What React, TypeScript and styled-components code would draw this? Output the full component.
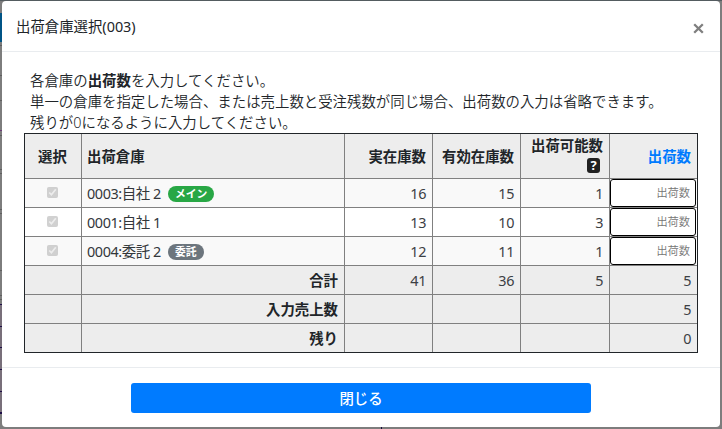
import React from "react";
import styled, { createGlobalStyle, css } from "styled-components";

const Global = createGlobalStyle`
  * { box-sizing: border-box; }
  html, body, #root { height: 100%; }
  body {
    margin: 0;
    overflow: hidden;
    color: #212529;
    font-family: "Noto Sans", "Noto Sans CJK JP", sans-serif;
    font-size: 14.4px;
    font-weight: 350;
    line-height: 21.2px;
  }
`;

const edgeLine = (y: number, color: string, height = 1) =>
  `linear-gradient(${color}, ${color}) 0 ${y}px / 2px ${height}px no-repeat`;

const edgeLines = [
  ...[45, 75, 100, 135, 169, 173, 209, 213, 270, 295, 299].map((y) => edgeLine(y, "#5f5f5f")),
  edgeLine(130, "#6b3b76"),
  ...[304, 326, 347, 369, 391].map((y) => edgeLine(y, "#1d0c46")),
  edgeLine(412, "#1d0c46", 2),
  edgeLine(304, "#786f7a", 109),
].join(",");

const Backdrop = styled.div`
  height: 429px;
  padding: 1px 2px 2px;
  background:
    linear-gradient(#005486, #005486) 0 13px / 2px 29px no-repeat,
    ${edgeLines},
    linear-gradient(#190c3b, #190c3b) 381px 427px / 1px 2px no-repeat,
    linear-gradient(#545c60, #545c60) 0 0 / 100% 1px no-repeat,
    #7d7d7d;
`;

const Dialog = styled.section`
  display: flex;
  flex-direction: column;
  height: 426px;
  background: #fff;
  border-radius: 4px;
  overflow: hidden;
`;

const Header = styled.header`
  display: flex;
  flex: none;
  align-items: center;
  justify-content: space-between;
  height: 51px;
  padding: 1px 16px 0 14px;
  border-bottom: 1px solid #e9ecef;
`;

const Title = styled.h1`
  margin: 0;
  font-size: 14.4px;
  font-weight: 400;
`;

const CloseButton = styled.button`
  display: flex;
  padding: 3px 0 0;
  border: 0;
  background: none;
  color: #7f7f7f;
`;

const Body = styled.main`
  flex: 1;
  padding: 18px 22px 0;
`;

const Guide = styled.p`
  margin: 0;
  padding-left: 6px;
  height: 63px;
  letter-spacing: 0.02px;
  white-space: nowrap;
`;

const Table = styled.div`
  display: grid;
  grid-template-columns: 56px 262px 87px 87px 88px 87px;
  grid-template-rows: 44px repeat(6, 28px);
  gap: 1px;
  width: 674px;
  border: 1px solid #212529;
  background: #808080;
`;

const Row = styled.div`
  display: contents;
`;

type Tone = "plain" | "stripe" | "shade";
const tones: Record<Tone, string> = { plain: "#fff", stripe: "#f9f9f9", shade: "#ededed" };

const Cell = styled.div<{ $tone: Tone; $align?: "left" | "center" | "right"; $weight?: number }>`
  display: flex;
  align-items: center;
  justify-content: ${(p) =>
    p.$align === "left" ? "flex-start" : p.$align === "center" ? "center" : "flex-end"};
  padding: 1px 6px 0 5px;
  background: ${(p) => tones[p.$tone]};
  font-weight: ${(p) => p.$weight ?? 400};
  white-space: nowrap;
`;

const NameCell = styled(Cell)`
  color: #33373b;
  letter-spacing: -0.4px;
`;

const NumberCell = styled(Cell)`
  color: #3c4044;
  letter-spacing: -0.4px;
`;

const StackedCell = styled(Cell)`
  flex-direction: column;
  align-items: flex-end;
  justify-content: flex-start;
`;

const InputCell = styled(Cell)`
  padding: 0 1px 0 0;
`;

const LinkLabel = styled.span`
  color: #007bff;
  font-weight: 700;
`;

const Check = styled.input`
  width: 11px;
  height: 11px;
  margin: 0 1px 3px 0;
`;

const QuantityInput = styled.input`
  width: 86px;
  height: 28px;
  padding: 0 5px 2px 2px;
  border: 1px solid #000;
  border-radius: 3px;
  background: #fff;
  font: 350 11.2px "Noto Sans CJK JP", sans-serif;
  text-align: right;
  &::placeholder { color: #757575; opacity: 1; }
`;

const Badge = styled.span<{ $main?: boolean }>`
  margin: 1px 0 0 7px;
  padding: 0 7px;
  border-radius: 8px;
  color: #fff;
  font-size: 10.8px;
  font-weight: 700;
  letter-spacing: 0;
  line-height: 16px;
  ${(p) => (p.$main ? css`background: #28a745;` : css`background: #6c757d;`)}
`;

const Help = styled.span`
  width: 13px;
  height: 15px;
  margin: 2px 3px 0 0;
  border-radius: 3px;
  background: #212121;
  color: #fff;
  font-size: 13px;
  font-weight: 700;
  line-height: 15px;
  text-align: center;
`;

const Footer = styled.footer`
  display: flex;
  flex: none;
  justify-content: center;
  height: 60px;
  padding-top: 15px;
  border-top: 1px solid #e9ecef;
`;

const PrimaryButton = styled.button`
  width: 460px;
  height: 30px;
  padding: 0 0 2px;
  border: 0;
  border-radius: 3px;
  background: #007bff;
  color: #fff;
  font: 500 14.4px "Noto Sans CJK JP", sans-serif;
`;

const warehouses = [
  { name: "0003:自社 2", badge: "メイン", main: true, values: [16, 15, 1] },
  { name: "0001:自社 1", values: [13, 10, 3] },
  { name: "0004:委託 2", badge: "委託", values: [12, 11, 1] },
];

const totals = [
  { label: "合計", values: ["41", "36", "5", "5"] },
  { label: "入力売上数", values: ["", "", "", "5"] },
  { label: "残り", values: ["", "", "", "0"] },
];

export default function App() {
  return (
    <>
      <Global />
      <Backdrop>
        <Dialog role="dialog">
          <Header>
            <Title>出荷倉庫選択(003)</Title>
            <CloseButton aria-label="閉じる">
              <svg width="11" height="11" viewBox="0 0 11 11" stroke="currentColor" strokeWidth="2.3">
                <path d="M1.2 1.2 9.8 9.8M9.8 1.2 1.2 9.8" />
              </svg>
            </CloseButton>
          </Header>
          <Body>
            <Guide>
              各倉庫の<b>出荷数</b>を入力してください。<br />
              単一の倉庫を指定した場合、または売上数と受注残数が同じ場合、出荷数の入力は省略できます。<br />
              残りが0になるように入力してください。
            </Guide>
            <Table role="table">
              <Row role="row">
                <Cell $tone="shade" $align="center" $weight={600}>選択</Cell>
                <Cell $tone="shade" $align="left" $weight={600}>出荷倉庫</Cell>
                <Cell $tone="shade" $weight={600}>実在庫数</Cell>
                <Cell $tone="shade" $weight={600}>有効在庫数</Cell>
                <StackedCell $tone="shade" $weight={600}>出荷可能数<Help>?</Help></StackedCell>
                <Cell $tone="shade"><LinkLabel>出荷数</LinkLabel></Cell>
              </Row>
              {warehouses.map((w, i) => {
                const tone: Tone = i % 2 ? "plain" : "stripe";
                return (
                  <Row role="row" key={w.name}>
                    <Cell $tone={tone} $align="center"><Check type="checkbox" checked disabled readOnly /></Cell>
                    <NameCell $tone={tone} $align="left">
                      {w.name}
                      {w.badge && <Badge $main={w.main}>{w.badge}</Badge>}
                    </NameCell>
                    {w.values.map((v, n) => <NumberCell $tone={tone} key={n}>{v}</NumberCell>)}
                    <InputCell $tone={tone}><QuantityInput placeholder="出荷数" /></InputCell>
                  </Row>
                );
              })}
              {totals.map((t) => (
                <Row role="row" key={t.label}>
                  <Cell $tone="shade" />
                  <Cell $tone="shade" $weight={600}>{t.label}</Cell>
                  {t.values.map((v, n) => <NumberCell $tone="shade" key={n}>{v}</NumberCell>)}
                </Row>
              ))}
            </Table>
          </Body>
          <Footer><PrimaryButton>閉じる</PrimaryButton></Footer>
        </Dialog>
      </Backdrop>
    </>
  );
}
